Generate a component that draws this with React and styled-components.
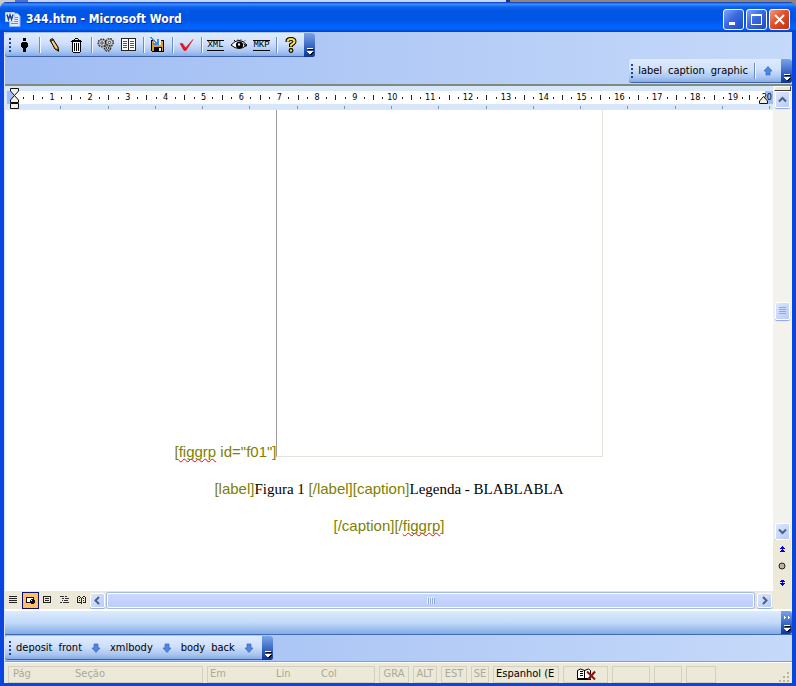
import React from "react";
import styled, { createGlobalStyle, css } from "styled-components";

const uiFont = `"DejaVu Sans Condensed", "DejaVu Sans", "Noto Sans", sans-serif`;

const GlobalStyle = createGlobalStyle`
  * { box-sizing: border-box; }
  html, body, #root { height: 100%; }
  body { margin: 0; overflow: hidden; font: 11px/14px ${uiFont}; color: #000; }
  button { margin: 0; padding: 0; border: 0; background: none; font: inherit; color: inherit; }
`;

const Desktop = styled.div`
  display: flex;
  flex-direction: column;
  min-height: 100vh;
  padding-top: 2px;
  background: linear-gradient(90deg, #c9c9c9 0 15px, #4a72c8 15px 28px, #c4d6f6 28px 506px, #16359a 506px 510px, #8d8779 510px);
`;

const Window = styled.div`
  flex: 1;
  display: flex;
  flex-direction: column;
  border-radius: 7px 7px 0 0;
  background: #0a46de;
  overflow: hidden;
`;

const TitleBar = styled.header`
  flex: none;
  display: flex;
  align-items: center;
  gap: 5px;
  height: 30px;
  padding: 4px 6px 0 5px;
  color: #fff;
  background: linear-gradient(180deg, #0831b4 0, #3d91ff 2px, #0f62f0 5px, #0055e2 9px, #0055e5 17px, #0163fb 25px, #0163ff 27px, #0148ce 29px, #0a3fc4 30px);
`;

const Title = styled.h1`
  flex: 1;
  margin: 0;
  font: bold 12px/16px ${uiFont};
  text-shadow: 1px 1px #0a2f96;
`;

const WindowButtons = styled.div`
  display: flex;
  gap: 2px;
`;

const WindowButton = styled.button`
  display: grid;
  place-items: center;
  width: 21px;
  height: 21px;
  border: 1px solid #fff;
  border-radius: 3px;
  background: ${(p) =>
    p.$danger
      ? "linear-gradient(135deg, #f09a80, #e0512c 45%, #b93412)"
      : "linear-gradient(135deg, #7fa5f5, #3a68e2 45%, #1f4ac8)"};
`;

const Frame = styled.div`
  flex: 1;
  min-height: 0;
  display: flex;
  flex-direction: column;
  margin: 0 4px 3px;
  border-left: 1px solid #dbe7fb;
  background: linear-gradient(90deg, #9fbcf3, #c5d9f9);
`;

const ToolbarRow = styled.div`
  flex: none;
  display: flex;
  justify-content: ${(p) => (p.$end ? "flex-end" : "flex-start")};
  padding: 1px 0;
`;

const Toolbar = styled.div`
  display: flex;
  height: 24px;
  border-bottom: 1px solid #3b62a8;
  border-radius: 3px;
  background: linear-gradient(180deg, #dfecfe 0, #cfe0fb 45%, #a9c6f2 80%, #86abe3 100%);
`;

const ToolbarItems = styled.div`
  display: flex;
  align-items: center;
  padding: 1px 2px 0 ${(p) => (p.$tight ? "2px" : "4px")};
`;

const Grip = styled.i`
  width: 2px;
  height: 15px;
  margin-right: 2px;
  background: repeating-linear-gradient(180deg, #27408b 0 2px, transparent 2px 4px);
`;

const IconButton = styled.button`
  display: grid;
  place-items: center;
  width: 23px;
  height: 20px;
`;

const Divider = styled.i`
  width: 2px;
  height: 16px;
  margin: 0 1px 0 3px;
  border-left: 1px solid #6a8ccb;
  border-right: 1px solid #f1f9ff;
`;

const TextButton = styled.button`
  height: 20px;
  padding: 0 3px;
  white-space: nowrap;
`;

const ArrowButton = styled.button`
  display: grid;
  place-items: center;
  width: 22px;
  height: 20px;
`;

const EndCap = styled.button`
  display: flex;
  align-items: flex-end;
  justify-content: flex-end;
  width: 11px;
  height: 24px;
  padding: 0 1px 2px 0;
  border-radius: 0 3px 3px 0;
  background: linear-gradient(180deg, #7ba4ea 0, #3e6cc6 50%, #0b3597 100%);
`;

const Workspace = styled.main`
  flex: 1;
  min-height: 0;
  display: grid;
  grid-template-columns: 1fr 19px;
  grid-template-rows: 1fr 18px;
  border-top: 2px solid #7f8d78;
  background: #ece9d8;
`;

const Page = styled.section`
  min-width: 0;
  display: flex;
  flex-direction: column;
  overflow: hidden;
  background: #fff;
`;

const Ruler = styled.div`
  flex: none;
  position: relative;
  height: 24px;
  padding: 5px 0 0 9px;
  background: #d8e6fb;
`;

const RulerScale = styled.div`
  height: 13px;
  margin-left: -7px;
  padding-left: 12px;
  overflow: hidden;
  background: linear-gradient(90deg, #9ebef5 7px, #fff 7px calc(100% - 8px), #9ebef5 calc(100% - 8px));
`;

const RulerMarks = styled.ol`
  display: grid;
  grid-template-columns: repeat(20, 1fr);
  margin: 0 -3px 0 0;
  padding: 0;
  list-style: none;
`;

const RulerUnit = styled.li`
  display: grid;
  grid-template-columns: repeat(4, 1fr);
  place-items: center;
  height: 13px;
  font: 9px/13px ${uiFont};

  /* The last number stays inside the scale. */
  &:last-child span {
    justify-self: end;
    margin-right: 4px;
  }
`;

const Dot = styled.i`
  width: 1px;
  height: 2px;
  background: #222;
`;

const Tick = styled.i`
  width: 1px;
  height: 5px;
  background: #222;
`;

const TabStops = styled.div`
  display: grid;
  grid-template-columns: repeat(16, 1fr);
  margin-right: 3px;
  padding-top: 2px;
`;

const TabStop = styled.i`
  height: 3px;
  border-right: 1px solid #7f93b5;
`;

const IndentMarker = styled.svg`
  position: absolute;
  top: 2px;
  ${(p) => (p.$right ? css`right: 4px;` : css`left: 4px;`)}
`;

const Sheet = styled.article`
  flex: 1;
  min-height: 0;
  overflow: hidden;
  text-align: center;
  font: 15px/18px "Liberation Serif", serif;
`;

const Paragraph = styled.p`
  margin: 0 0 19px;
  white-space: nowrap;
`;

const Tag = styled.span`
  color: #808000;
  font-family: "Liberation Sans", Arial, sans-serif;
`;

const Misspelt = styled.span`
  text-decoration: underline wavy #e01010 1px;
  text-decoration-skip-ink: none;
  text-underline-offset: 1px;
`;

const Figure = styled.span`
  display: inline-block;
  width: 327px;
  height: 347px;
  border: 1px solid #e4e2da;
  border-top: 0;
  border-left-color: #9a9a9a;
`;

const VerticalScroll = styled.aside`
  display: flex;
  flex-direction: column;
  align-items: center;
  padding-right: 1px;
  background: #f3f2ec;
`;

const SplitBox = styled.button`
  width: 17px;
  height: 5px;
  border: 1px solid #404040;
  border-top-color: #fff;
  border-left-color: #fff;
  background: #ece9d8;
`;

const ScrollButton = styled.button`
  flex: none;
  display: grid;
  place-items: center;
  width: 15px;
  height: ${(p) => (p.$tall ? 17 : 15)}px;
  border: 1px solid #fff;
  border-radius: 2px;
  background: linear-gradient(135deg, #dce6fe, #b6cbfb);
  box-shadow: 0 1px 1px #8aa6dd;
`;

const VerticalTrack = styled.div`
  flex: 1;
  display: grid;
  grid-template-rows: 47fr 18px 49fr;
`;

const VerticalThumb = styled(ScrollButton)`
  grid-row: 2;
  height: 18px;
`;

const BrowseButtons = styled.div`
  display: flex;
  flex-direction: column;
  align-items: center;
  width: 100%;
  height: 51px;
  background: #ece9d8;
`;

const BrowseButton = styled.button`
  display: grid;
  place-items: center;
  width: 17px;
  height: 17px;
`;

const BottomScroll = styled.div`
  display: flex;
  align-items: center;
  min-width: 0;
  padding-right: 1px;
  background: #ece9d8;
`;

const ViewButton = styled.button`
  display: grid;
  place-items: center;
  width: 17px;
  height: 17px;
  ${(p) =>
    p.$active &&
    css`
      border: 1px solid #10106a;
      background: #ffbf66;
    `}
`;

const HorizontalThumb = styled.div`
  flex: 1;
  display: grid;
  place-items: center;
  height: 15px;
  margin: 0 3px 0 2px;
  border: 1px solid #fff;
  border-radius: 2px;
  background: linear-gradient(180deg, #cbd9fd, #bccdfa);
  box-shadow: 0 0 1px 1px #9db6e6;
`;

const ViewButtons = styled.div`
  display: flex;
  width: 85px;
`;

const Band = styled.div`
  flex: none;
  display: flex;
  justify-content: flex-end;
  height: 26px;
  border-top: 2px solid #fff;
  border-bottom: 1px solid #3f6ab4;
  background: linear-gradient(180deg, #dcebfe 0, #c3dafa 50%, #83abe6 100%);
`;

const BandCap = styled(EndCap)`
  flex-direction: column;
  align-items: flex-end;
  justify-content: space-between;
  height: 23px;
  padding-top: 4px;
`;

const StatusBar = styled.footer`
  flex: none;
  display: flex;
  align-items: center;
  gap: 4px;
  height: 22px;
  padding: 3px 2px 0 3px;
  border-top: 1px solid #8f9bb8;
  background: #ece9d8;
  box-shadow: inset 0 1px #fff;
`;

const StatusCell = styled.div`
  display: flex;
  align-items: center;
  justify-content: ${(p) => (p.$center ? "center" : "flex-start")};
  width: ${(p) => p.$width}px;
  height: 17px;
  padding-left: ${(p) => (p.$center ? 0 : 2)}px;
  border: 1px solid #d4d0c0;
  color: ${(p) => (p.$on ? "#000" : "#aca899")};
  white-space: nowrap;
  overflow: hidden;
`;

const StatusField = styled.span`
  width: ${(p) => p.$width}px;
  padding-left: ${(p) => p.$indent || 0}px;
`;

const Resize = styled.svg`
  margin-left: auto;
  align-self: flex-end;
`;

const Svg = ({ w = 18, h = 16, smooth, children }) => (
  <svg width={w} height={h} viewBox={`0 0 ${w} ${h}`} fill="none" shapeRendering={smooth ? "auto" : "crispEdges"} aria-hidden="true">
    {children}
  </svg>
);

const WordIcon = () => (
  <Svg w={16} h={17} smooth>
    <path d="M4.500 2.500h8l2.500 2.500v10.500h-10.500z" fill="#dfe9fb" stroke="#8fb1ee" />
    <path d="M8 6.500h5M8 8.500h5M6 10.500h7M6 12.500h7" stroke="#668dd2" />
    <path d="M.500 1.500h9v9h-9z" fill="#e7effc" stroke="#b9cdf4" />
    <path d="M2 3.500l1.500 5 1.500-4.500 1.500 4.500 1.500-5" stroke="#173f99" strokeWidth="1.400" />
  </Svg>
);

const PersonIcon = () => (
  <Svg w={7}>
    <path d="M2 1h3v3h-3zM1 5h5v1h1v4h-1v1h-1v4h-3v-4h-1v-1h-1v-4h1z" fill="#000" />
  </Svg>
);
const PencilIcon = () => (
  <Svg w={12} smooth>
    <path d="M2 3l2.500-1.500 5.500 8.500.5 4-3.500-2z" fill="#dba944" stroke="#000" />
    <path d="M4 4l4.500 7" stroke="#ffeeb0" />
    <path d="M2.500 4.500l3-2" stroke="#000" />
    <path d="M8.500 12.500h2.500v2.500z" fill="#000" />
  </Svg>
);
const TrashIcon = () => (
  <Svg w={11}>
    <path d="M2 5h7v10h-7z" fill="#fff" />
    <path d="M4 1.500h3M3.500 2v1M7.500 2v1M1 3.500h9M0 4.500h11M1.500 5v10M3.500 6v8M5.500 6v8M7.500 6v8M9.500 5v10M2 15.500h7" stroke="#000" />
  </Svg>
);
const GearsIcon = () => (
  <Svg smooth>
    {[[5, 6, 3.5], [12.5, 5.5, 3.5], [10.5, 11, 2.8]].map(([x, y, r]) => (
      <g key={`${x}-${y}`}>
        <circle cx={x} cy={y} r={r} fill="#d9d9d9" stroke="#222" strokeWidth="2" strokeDasharray="1.500 .9" />
        <circle cx={x} cy={y} r={r - 0.3} fill="#dcdcdc" stroke="#555" strokeWidth="0.600" />
        <circle cx={x} cy={y} r="1.200" stroke="#222" strokeWidth="0.900" fill="#fff" />
      </g>
    ))}
  </Svg>
);
const BookIcon = () => (
  <Svg w={16}>
    <path d="M.500 1.500h14v12h-14z" fill="#fff" stroke="#222" />
    <path d="M7.500 1v13" stroke="#222" />
    <path d="M2 4.500h4M2 6.500h4M2 8.500h4M2 10.500h4M9 4.500h4M9 6.500h4M9 8.500h4M9 10.500h4" stroke="#555" />
  </Svg>
);
const SaveIcon = () => (
  <Svg w={16}>
    <path d="M1.500 3.500h12v11h-11l-1-1z" fill="#dc9a2c" stroke="#000" />
    <path d="M4 3h7v5h-7z" fill="#fff4ce" />
    <path d="M4 10h8v5h-8z" fill="#000" />
    <path d="M9 11h2v3h-2z" fill="#fff" />
    <path d="M0 0h2v1h1v1h1v1h1v1h1v1h1v-3h2v6h-6v-2h2v-1h-1v-1h-1v-1h-1v-1h-1v-1h-1z" fill="#3b8bea" />
  </Svg>
);
const CheckIcon = () => (
  <Svg w={16} smooth>
    <path d="M1 6.500h2.500l3 4.500 7.500-8.500-7 11h-2z" fill="#e3121f" stroke="#e3121f" strokeWidth="0.600" />
  </Svg>
);
const EyeIcon = () => (
  <Svg smooth>
    <path d="M1 8q8-9 16 0q-8 7-16 0z" fill="#fff" stroke="#000" />
    <circle cx="9.500" cy="8" r="3.600" fill="#000" />
    <path d="M8 7.500h2" stroke="#fff" strokeWidth="2" />
    <path d="M5 4l-1-1M8 3.500v-1M11 3.500v-1M14 4.500l1-1M14 8h3M13.500 6.500l2.500 3" stroke="#000" />
  </Svg>
);
const HelpIcon = () => (
  <Svg w={12} smooth>
    <path d="M2.500 5v-1q0-2 3.500-2t3.500 2.500q0 1.500-3.500 3.500v2" stroke="#000" strokeWidth="4" />
    <path d="M2.500 4.800q0-2.800 3.500-2.800t3.500 2.500q0 1.500-3.500 3.500v1.500" stroke="#fbe23a" strokeWidth="2" />
    <circle cx="6" cy="13.500" r="2.400" fill="#000" />
    <circle cx="6" cy="13.500" r="1.200" fill="#fbe23a" />
  </Svg>
);

const LabelIcon = styled.span`
  width: 17px;
  height: 11px;
  border: solid #000;
  border-width: 1px 0;
  font: 9px/9px "Liberation Mono", monospace;
  text-align: center;
`;

const BlueArrow = ({ up }) => (
  <Svg w={10} h={10} smooth>
    <path
      d={up ? "M5 .5l4 4.500h-2v4h-4v-4h-2z" : "M5 9.500l4-4.500h-2v-4h-4v4h-2z"}
      fill="#4f86e0"
      stroke="#3465bd"
      strokeWidth="0.700"
    />
  </Svg>
);

const Overflow = () => (
  <Svg w={7} h={7}>
    <path d="M1 1h6v1h-6zM1 4h6v1h-1v1h-1v1h-2v-1h-1z" fill="#000" />
    <path d="M0 0h6v1h-6zM0 3h6v1h-1v1h-1v1h-2v-1h-1v-1h-1z" fill="#fff" />
  </Svg>
);
const MoreChevrons = () => (
  <Svg w={7} h={5}>
    <path d="M0 1h1v1h1v1h-1v1h-1zM4 1h1v1h1v1h-1v1h-1z" fill="#fff" />
  </Svg>
);

const Chevron = ({ dir }) => (
  <Svg w={9} h={9} smooth>
    <path
      d={{ up: "M1 6.500l3.500-3.500 3.500 3.500", down: "M1 2.500l3.500 3.500 3.500-3.500", left: "M6 1l-3.500 3.500 3.500 3.500", right: "M3 1l3.500 3.500-3.500 3.500" }[dir]}
      stroke="#4d6185"
      strokeWidth="2"
    />
  </Svg>
);

const DoubleArrow = ({ down }) => (
  <Svg w={5} h={6}>
    <path
      d={down ? "M1 0h3v1h1v1h-5v-1h1zM2 2h1v1h-1zM0 3h5v1h-1v1h-1v1h-1v-1h-1v-1h-1z" : "M2 0h1v1h1v1h1v1h-5v-1h1v-1h1zM2 3h1v1h1v1h1v1h-5v-1h1v-1h1z"}
      fill="#0000e0"
    />
  </Svg>
);

const views = [
  ["Normal", <path key="p" d="M0 .500h8M0 2.500h8M0 4.500h8M0 6.500h8" stroke="#222" />],
  ["Web Layout", <g key="p"><path d="M.500 1.500h7v5h-7z" fill="#fff" stroke="#111" /><path d="M5 3h3v1h1v3h-1v1h-3v-1h-1v-3h1z" fill="#111" /><path d="M5 4h1v1h-1z" fill="#fff" /></g>],
  ["Print Layout", <path key="p" d="M.500 .500h7v6h-7zM2 2.500h4M2 4.500h4" stroke="#222" />],
  ["Outline", <path key="p" d="M0 .500h4M5 .500h2M2 2.500h2M5 2.500h4M2 4.500h1M4 4.500h4M0 6.500h2M3 6.500h6" stroke="#333" />],
  ["Reading", <path key="p" d="M.500 1v5h3M8.500 1v5h-3M1 .500h2M6 .500h2M3.500 1v1M5.500 1v1M4.500 2v6M2 2.500h1M2 4.500h1M6 2.500h1M6 4.500h1" stroke="#222" />],
];

const mainTools = [
  ["Author", <PersonIcon />],
  null,
  ["Edit", <PencilIcon />],
  ["Delete", <TrashIcon />],
  null,
  ["Automatic", <GearsIcon />],
  ["Contents", <BookIcon />],
  null,
  ["Save", <SaveIcon />],
  null,
  ["Validate", <CheckIcon />],
  null,
  ["XML", <LabelIcon>XML</LabelIcon>],
  ["View", <EyeIcon />],
  ["MKP", <LabelIcon>MKP</LabelIcon>],
  null,
  ["Help", <HelpIcon />],
];

const OverflowCap = () => (
  <EndCap aria-label="Toolbar options"><Overflow /></EndCap>
);

const flags = [["GRA", 30], ["ALT", 24], ["EST", 26], ["SE", 18]];

export default function App() {
  return (
    <Desktop>
      <GlobalStyle />
      <Window>
        <TitleBar>
          <WordIcon />
          <Title>344.htm - Microsoft Word</Title>
          <WindowButtons>
            <WindowButton aria-label="Minimize"><Svg w={13} h={13}><path d="M2 9h6v3h-6z" fill="#fff" /></Svg></WindowButton>
            <WindowButton aria-label="Maximize"><Svg w={13} h={13}><path d="M1.500 2v9.500h10v-9.500" stroke="#fff" /><path d="M1 2h11" stroke="#fff" strokeWidth="2" /></Svg></WindowButton>
            <WindowButton $danger aria-label="Close"><Svg w={13} h={13} smooth><path d="M2 2l9 9M11 2l-9 9" stroke="#fff" strokeWidth="2" /></Svg></WindowButton>
          </WindowButtons>
        </TitleBar>
        <Frame>
          <ToolbarRow>
            <Toolbar role="toolbar" aria-label="Markup">
              <ToolbarItems>
                <Grip />
                {mainTools.map((tool, i) =>
                  tool ? <IconButton key={i} aria-label={tool[0]}>{tool[1]}</IconButton> : <Divider key={i} />
                )}
              </ToolbarItems>
              <OverflowCap />
            </Toolbar>
          </ToolbarRow>
          <ToolbarRow $end>
            <Toolbar role="toolbar" aria-label="Figure group">
              <ToolbarItems $tight>
                <Grip />
                <TextButton>label</TextButton>
                <TextButton>caption</TextButton>
                <TextButton>graphic</TextButton>
                <Divider />
                <ArrowButton aria-label="Up"><BlueArrow up /></ArrowButton>
              </ToolbarItems>
              <OverflowCap />
            </Toolbar>
          </ToolbarRow>
          <Workspace>
            <Page>
              <Ruler>
                <RulerScale>
                  <RulerMarks>
                    {Array.from({ length: 20 }, (_, i) => (
                      <RulerUnit key={i}><Dot /><Tick /><Dot /><span>{i + 1}</span></RulerUnit>
                    ))}
                  </RulerMarks>
                </RulerScale>
                <TabStops>
                  {Array.from({ length: 16 }, (_, i) => <TabStop key={i} />)}
                </TabStops>
                <IndentMarker width="11" height="22" viewBox="0 0 11 22">
                  <path d="M1.500.500h8v2.500l-4 4.500-4-4.500zM1.500 14.500v-2.500l4-4.500 4 4.500v2.500zM1.500 15.500h8v5h-8z" fill="#f4f1e6" stroke="#111" />
                </IndentMarker>
                <IndentMarker $right width="11" height="22" viewBox="0 0 11 22">
                  <path d="M1.500 15.500v-2.500l4-4.500 4 4.500v2.500z" fill="#f4f1e6" stroke="#111" />
                </IndentMarker>
              </Ruler>
              <Sheet>
                <Paragraph>
                  <Tag>[<Misspelt>figgrp</Misspelt> id="f01"]</Tag>
                  <Figure role="img" aria-label="Figure" />
                </Paragraph>
                <Paragraph><Tag>[label]</Tag>Figura 1 <Tag>[/label][caption]</Tag>Legenda - BLABLABLA</Paragraph>
                <Paragraph><Tag>[/caption][/<Misspelt>figgrp</Misspelt>]</Tag></Paragraph>
              </Sheet>
            </Page>
            <VerticalScroll>
              <SplitBox aria-label="Split" />
              <ScrollButton $tall aria-label="Scroll up"><Chevron dir="up" /></ScrollButton>
              <VerticalTrack>
                <VerticalThumb aria-label="Scroll position">
                  <Svg w={7} h={8}><path d="M0 .500h7M0 2.500h7M0 4.500h7M0 6.500h7" stroke="#8fa9e6" /></Svg>
                </VerticalThumb>
              </VerticalTrack>
              <ScrollButton $tall aria-label="Scroll down"><Chevron dir="down" /></ScrollButton>
              <BrowseButtons>
                <BrowseButton aria-label="Previous page"><DoubleArrow /></BrowseButton>
                <BrowseButton aria-label="Select browse object">
                  <Svg w={8} h={8} smooth><circle cx="4" cy="4" r="3" fill="#b5b3a6" stroke="#222" /></Svg>
                </BrowseButton>
                <BrowseButton aria-label="Next page"><DoubleArrow down /></BrowseButton>
              </BrowseButtons>
            </VerticalScroll>
            <BottomScroll>
              <ViewButtons>
                {views.map(([name, art]) => (
                  <ViewButton key={name} $active={name === "Web Layout"} aria-label={name}><Svg w={9} h={8}>{art}</Svg></ViewButton>
                ))}
              </ViewButtons>
              <ScrollButton aria-label="Scroll left"><Chevron dir="left" /></ScrollButton>
              <HorizontalThumb>
                <Svg w={8} h={7}><path d="M.500 0v7M2.500 0v7M4.500 0v7M6.500 0v7" stroke="#edf3ff" /><path d="M1.500 1v6M3.500 1v6M5.500 1v6M7.500 1v6" stroke="#8fa9e6" /></Svg>
              </HorizontalThumb>
              <ScrollButton aria-label="Scroll right"><Chevron dir="right" /></ScrollButton>
            </BottomScroll>
          </Workspace>
          <Band>
            <BandCap aria-label="More buttons"><MoreChevrons /><Overflow /></BandCap>
          </Band>
          <ToolbarRow>
            <Toolbar role="toolbar" aria-label="Document">
              <ToolbarItems>
                <Grip />
                <TextButton>deposit</TextButton>
                <TextButton>front</TextButton>
                <ArrowButton aria-label="Open front"><BlueArrow /></ArrowButton>
                <TextButton>xmlbody</TextButton>
                <ArrowButton aria-label="Open xmlbody"><BlueArrow /></ArrowButton>
                <TextButton>body</TextButton>
                <TextButton>back</TextButton>
                <ArrowButton aria-label="Open back"><BlueArrow /></ArrowButton>
              </ToolbarItems>
              <OverflowCap />
            </Toolbar>
          </ToolbarRow>
          <StatusBar>
            <StatusCell $width={195}>
              <StatusField $width={64} $indent={2}>Pág</StatusField>
              <StatusField>Seção</StatusField>
            </StatusCell>
            <StatusCell $width={168}>
              <StatusField $width={66}>Em</StatusField>
              <StatusField $width={45}>Lin</StatusField>
              <StatusField>Col</StatusField>
            </StatusCell>
            {flags.map(([name, width]) => <StatusCell key={name} $center $width={width}>{name}</StatusCell>)}
            <StatusCell $on $width={66}>Espanhol (E</StatusCell>
            <StatusCell $center $on $width={45}>
              <Svg w={20} h={13} smooth>
                <path d="M1.500 2.500l3-1.500 4 1.500 4-1.500 2 1.500v8h-13z" fill="#fff" stroke="#000" />
                <path d="M8.500 2v9M1 11.500h14M4 3.500h3M4 5.500h3M4 7.500h3" stroke="#000" />
                <path d="M11 3.500l8 8M19 3.500l-7 8" stroke="#8a1010" strokeWidth="2" />
              </Svg>
            </StatusCell>
            <StatusCell $width={38} />
            <StatusCell $width={28} />
            <StatusCell $width={30} />
            <Resize width="12" height="12" viewBox="0 0 12 12">
              <path d="M9 1h2v2h-2zM9 5h2v2h-2zM9 9h2v2h-2zM5 5h2v2h-2zM5 9h2v2h-2zM1 9h2v2h-2z" fill="#b8b4a2" />
            </Resize>
          </StatusBar>
        </Frame>
      </Window>
    </Desktop>
  );
}
